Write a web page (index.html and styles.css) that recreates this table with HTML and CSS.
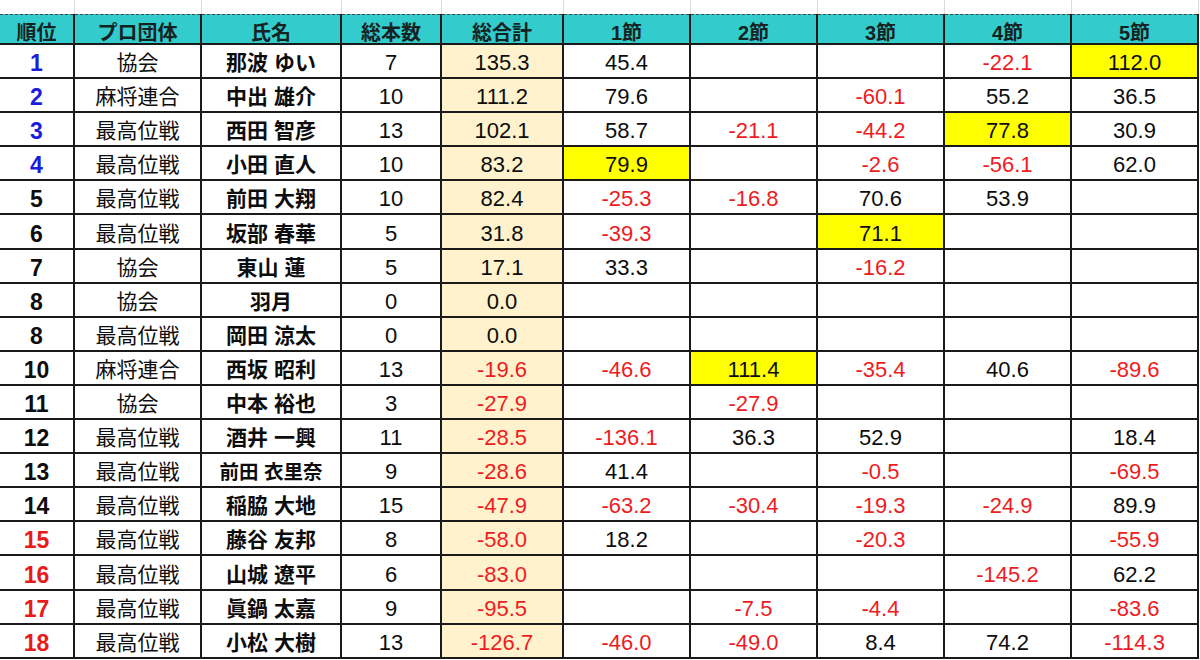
FILE: index.html
```html
<!DOCTYPE html>
<html lang="ja">
<head>
<meta charset="utf-8">
<title>順位表</title>
<link rel="stylesheet" href="styles.css">
</head>
<body>
<table class="sheet">
  <colgroup>
    <col class="c-rank"><col class="c-org"><col class="c-name"><col class="c-cnt"><col class="c-total">
    <col class="c-s"><col class="c-s"><col class="c-s"><col class="c-s"><col class="c-s">
  </colgroup>
  <thead>
    <tr class="pad"><td></td><td></td><td></td><td></td><td></td><td></td><td></td><td></td><td></td><td></td></tr>
    <tr class="head"><th>順位</th><th>プロ団体</th><th>氏名</th><th>総本数</th><th>総合計</th><th>1節</th><th>2節</th><th>3節</th><th>4節</th><th>5節</th></tr>
  </thead>
  <tbody class="data">
    <tr><td class="rank blue">1</td><td class="org">協会</td><td class="name">那波 ゆい</td><td>7</td><td class="total">135.3</td><td>45.4</td><td></td><td></td><td class="neg">-22.1</td><td class="hl">112.0</td></tr>
    <tr><td class="rank blue">2</td><td class="org">麻将連合</td><td class="name">中出 雄介</td><td>10</td><td class="total">111.2</td><td>79.6</td><td></td><td class="neg">-60.1</td><td>55.2</td><td>36.5</td></tr>
    <tr><td class="rank blue">3</td><td class="org">最高位戦</td><td class="name">西田 智彦</td><td>13</td><td class="total">102.1</td><td>58.7</td><td class="neg">-21.1</td><td class="neg">-44.2</td><td class="hl">77.8</td><td>30.9</td></tr>
    <tr><td class="rank blue">4</td><td class="org">最高位戦</td><td class="name">小田 直人</td><td>10</td><td class="total">83.2</td><td class="hl">79.9</td><td></td><td class="neg">-2.6</td><td class="neg">-56.1</td><td>62.0</td></tr>
    <tr><td class="rank">5</td><td class="org">最高位戦</td><td class="name">前田 大翔</td><td>10</td><td class="total">82.4</td><td class="neg">-25.3</td><td class="neg">-16.8</td><td>70.6</td><td>53.9</td><td></td></tr>
    <tr><td class="rank">6</td><td class="org">最高位戦</td><td class="name">坂部 春華</td><td>5</td><td class="total">31.8</td><td class="neg">-39.3</td><td></td><td class="hl">71.1</td><td></td><td></td></tr>
    <tr><td class="rank">7</td><td class="org">協会</td><td class="name">東山 蓮</td><td>5</td><td class="total">17.1</td><td>33.3</td><td></td><td class="neg">-16.2</td><td></td><td></td></tr>
    <tr><td class="rank">8</td><td class="org">協会</td><td class="name">羽月</td><td>0</td><td class="total">0.0</td><td></td><td></td><td></td><td></td><td></td></tr>
    <tr><td class="rank">8</td><td class="org">最高位戦</td><td class="name">岡田 涼太</td><td>0</td><td class="total">0.0</td><td></td><td></td><td></td><td></td><td></td></tr>
    <tr><td class="rank">10</td><td class="org">麻将連合</td><td class="name">西坂 昭利</td><td>13</td><td class="total neg">-19.6</td><td class="neg">-46.6</td><td class="hl">111.4</td><td class="neg">-35.4</td><td>40.6</td><td class="neg">-89.6</td></tr>
    <tr><td class="rank">11</td><td class="org">協会</td><td class="name">中本 裕也</td><td>3</td><td class="total neg">-27.9</td><td></td><td class="neg">-27.9</td><td></td><td></td><td></td></tr>
    <tr><td class="rank">12</td><td class="org">最高位戦</td><td class="name">酒井 一興</td><td>11</td><td class="total neg">-28.5</td><td class="neg">-136.1</td><td>36.3</td><td>52.9</td><td></td><td>18.4</td></tr>
    <tr><td class="rank">13</td><td class="org">最高位戦</td><td class="name fit">前田 衣里奈</td><td>9</td><td class="total neg">-28.6</td><td>41.4</td><td></td><td class="neg">-0.5</td><td></td><td class="neg">-69.5</td></tr>
    <tr><td class="rank">14</td><td class="org">最高位戦</td><td class="name">稲脇 大地</td><td>15</td><td class="total neg">-47.9</td><td class="neg">-63.2</td><td class="neg">-30.4</td><td class="neg">-19.3</td><td class="neg">-24.9</td><td>89.9</td></tr>
    <tr><td class="rank red">15</td><td class="org">最高位戦</td><td class="name">藤谷 友邦</td><td>8</td><td class="total neg">-58.0</td><td>18.2</td><td></td><td class="neg">-20.3</td><td></td><td class="neg">-55.9</td></tr>
    <tr><td class="rank red">16</td><td class="org">最高位戦</td><td class="name">山城 遼平</td><td>6</td><td class="total neg">-83.0</td><td></td><td></td><td></td><td class="neg">-145.2</td><td>62.2</td></tr>
    <tr><td class="rank red">17</td><td class="org">最高位戦</td><td class="name">眞鍋 太嘉</td><td>9</td><td class="total neg">-95.5</td><td></td><td class="neg">-7.5</td><td class="neg">-4.4</td><td></td><td class="neg">-83.6</td></tr>
    <tr><td class="rank red">18</td><td class="org">最高位戦</td><td class="name">小松 大樹</td><td>13</td><td class="total neg">-126.7</td><td class="neg">-46.0</td><td class="neg">-49.0</td><td>8.4</td><td>74.2</td><td class="neg">-114.3</td></tr>
  </tbody>
</table>
</body>
</html>
```
FILE: styles.css
```css
html, body {
  margin: 0;
  padding: 0;
  background: #ffffff;
}

body {
  font-family: "Liberation Sans", "Noto Sans CJK JP", sans-serif;
  color: #111111;
  overflow: hidden;
}

.sheet {
  border-collapse: collapse;
  table-layout: fixed;
  width: 1198px;
}

.c-rank { width: 74px; }
.c-org { width: 127px; }
.c-name { width: 140px; }
.c-cnt { width: 100px; }
.c-total { width: 122px; }
.c-s { width: 127px; }

.pad {
  height: 14px;
}

.pad td {
  padding: 0;
  border-right: 1px solid #dcdcdc;
}

.head {
  height: 30px;
}

.head th {
  padding: 0;
  background: #33cccc;
  color: #152222;
  font-size: 20px;
  font-weight: bold;
  line-height: 20px;
  text-align: center;
  vertical-align: bottom;
  border: 2px solid #1a1a1a;
  border-top: 1px dashed #444444;
}

.head th:first-child,
.data td:first-child {
  border-left: none;
}

.data tr {
  height: 34.1px;
}

.data td {
  padding: 0 0 1px;
  font-size: 22px;
  line-height: 26px;
  text-align: center;
  vertical-align: bottom;
  border: 2px solid #1a1a1a;
  white-space: nowrap;
  color: #0d0d0d;
}

.data td.org {
  font-size: 21px;
}

.data td.name {
  font-size: 21px;
  font-weight: bold;
}

.data td.name.fit {
  font-size: 19.5px;
}

.data td.rank {
  font-size: 23px;
  font-weight: bold;
}

.data td.blue { color: #1c1cdc; }
.data td.red { color: #e81a1a; }

.data td.total { background: #fff2cc; }
.data td.hl { background: #ffff00; }
.data td.neg { color: #ee1c22; }
```
